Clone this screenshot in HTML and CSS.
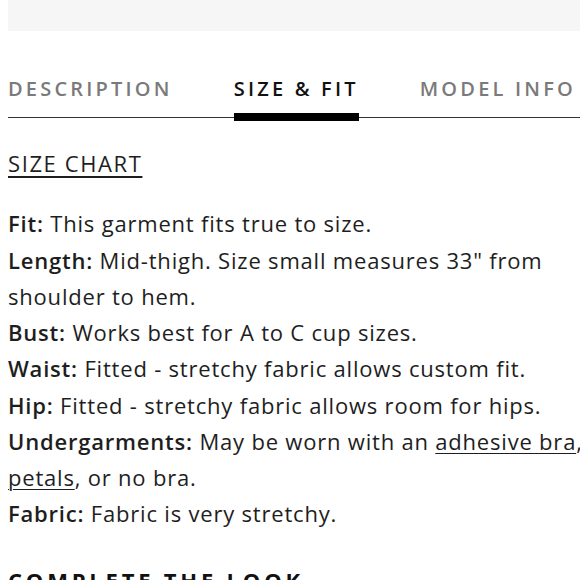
FILE: index.html
```html
<!DOCTYPE html>
<html lang="en">
<head>
<meta charset="utf-8">
<title>Size &amp; Fit</title>
<link rel="stylesheet" href="styles.css">
</head>
<body>
<div class="page">
  <div class="topbar"></div>
  <nav class="tabs">
    <span class="tab">DESCRIPTION</span>
    <span class="tab active">SIZE &amp; FIT</span>
    <span class="tab">MODEL INFO</span>
  </nav>
  <a class="chart-link" href="#">SIZE CHART</a>
  <div class="details">
    <p><b>Fit:</b> This garment fits true to size.</p>
    <p><b>Length:</b> Mid-thigh. Size small measures 33" from shoulder to hem.</p>
    <p><b>Bust:</b> Works best for A to C cup sizes.</p>
    <p><b>Waist:</b> Fitted - stretchy fabric allows custom fit.</p>
    <p><b>Hip:</b> Fitted - stretchy fabric allows room for hips.</p>
    <p><b>Undergarments:</b> May be worn with an <a href="#">adhesive bra</a>, <a href="#">petals</a>, or no bra.</p>
    <p><b>Fabric:</b> Fabric is very stretchy.</p>
  </div>
  <h2 class="section-title">COMPLETE THE LOOK</h2>
</div>
</body>
</html>
```

FILE: styles.css
```css
html, body {
  margin: 0;
  padding: 0;
  background: #fff;
  overflow: hidden;
}
body {
  font-family: "Open Sans", "Liberation Sans", sans-serif;
  color: #1e1e1e;
}
.page {
  width: 600px;
  padding-left: 8px;
}
.topbar {
  height: 31px;
  background: #f6f6f6;
}
.tabs {
  display: flex;
  gap: 61px;
  margin-top: 46px;
  border-bottom: 1px solid #333;
}
.tab {
  position: relative;
  font-size: 20px;
  line-height: 24px;
  letter-spacing: 3.2px;
  font-weight: 600;
  color: #7a7a7a;
  padding-bottom: 16px;
}
.tab.active {
  color: #111;
}
.tab.active::after {
  content: "";
  position: absolute;
  left: 0;
  right: 0;
  bottom: -4px;
  height: 8px;
  background: #000;
}
.chart-link {
  display: inline-block;
  margin-top: 27px;
  font-size: 22px;
  line-height: 36.25px;
  color: #1e1e1e;
  letter-spacing: 1.6px;
  text-decoration: underline;
  text-decoration-thickness: 1.5px;
  text-underline-offset: 4px;
}
.details {
  margin-top: 24px;
  font-size: 22px;
  line-height: 36.25px;
  letter-spacing: 0.8px;
}
.details p {
  margin: 0;
}
.details b {
  font-weight: 600;
}
.details a {
  color: inherit;
  text-decoration: underline;
  text-decoration-thickness: 1px;
  text-underline-offset: 3px;
}
.section-title {
  margin: 30px 0 0;
  font-size: 22px;
  line-height: 36.25px;
  font-weight: 700;
  letter-spacing: 3.8px;
  color: #111;
}
```
